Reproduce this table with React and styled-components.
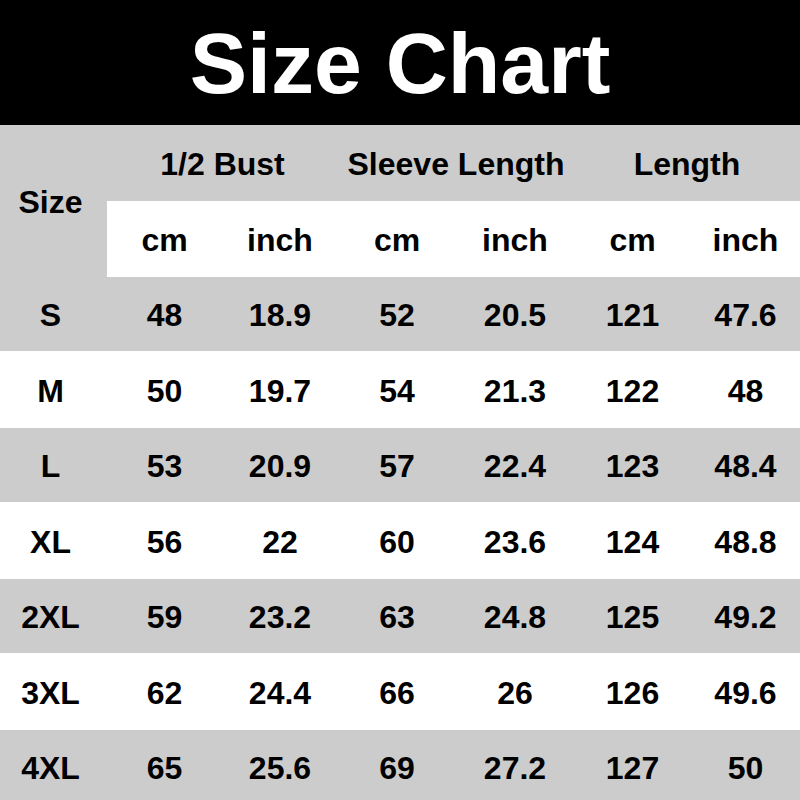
import styled, { createGlobalStyle } from 'styled-components';

const GRAY = '#cccccc';

const GlobalStyle = createGlobalStyle`
    html, body {
        margin: 0;
        padding: 0;
        background: #ffffff;
        overflow: hidden;
    }
    body {
        font-family: "Liberation Sans", Arial, sans-serif;
        color: #000000;
    }
`;

const Page = styled.div`
    width: 800px;
    height: 800px;
    overflow: hidden;
`;

const TitleBar = styled.header`
    height: 125px;
    background: #000000;
    display: flex;
    align-items: center;
    justify-content: center;
`;

const Title = styled.h1`
    margin: 0;
    color: #ffffff;
    font-size: 86px;
    font-weight: 700;
    line-height: 1;
`;

// size column + 3 groups of cm / inch
const Table = styled.div`
    display: grid;
    grid-template-columns: 107px 115px 116px 118px 118px 117px 109px;
    grid-template-rows: 76px 76px;
    grid-auto-rows: auto;
`;

const Cell = styled.div`
    display: flex;
    align-items: center;
    justify-content: center;
    background: ${p => (p.$gray ? GRAY : '#ffffff')};
    height: ${p => p.$h || 'auto'};
    padding-top: 2px;
    box-sizing: border-box;
    font-size: 32px;
    font-weight: 700;
    line-height: 1;
    white-space: nowrap;
`;

const SizeHead = styled(Cell)`
    grid-row: span 2;
    padding-right: 6px;
`;

const GroupHead = styled(Cell)`
    grid-column: span 2;
`;

const SizeCell = styled(Cell)`
    padding-right: 6px;
`;

const groups = ['1/2 Bust', 'Sleeve Length', 'Length'];

const rows = [
    ['S', '48', '18.9', '52', '20.5', '121', '47.6'],
    ['M', '50', '19.7', '54', '21.3', '122', '48'],
    ['L', '53', '20.9', '57', '22.4', '123', '48.4'],
    ['XL', '56', '22', '60', '23.6', '124', '48.8'],
    ['2XL', '59', '23.2', '63', '24.8', '125', '49.2'],
    ['3XL', '62', '24.4', '66', '26', '126', '49.6'],
    ['4XL', '65', '25.6', '69', '27.2', '127', '50'],
];

const App = () => {
    return (
        <Page>
            <GlobalStyle />
            <TitleBar>
                <Title>Size Chart</Title>
            </TitleBar>
            <Table>
                <SizeHead $gray>Size</SizeHead>
                {groups.map(g => (
                    <GroupHead key={g} $gray>{g}</GroupHead>
                ))}
                {groups.map(g => [
                    <Cell key={g + 'cm'}>cm</Cell>,
                    <Cell key={g + 'in'}>inch</Cell>,
                ])}
                {rows.map((row, i) => {
                    const gray = i % 2 === 0;
                    const h = gray ? '74px' : '77px';
                    return row.map((v, j) =>
                        j === 0 ? (
                            <SizeCell key={i + '-' + j} $gray={gray} $h={h}>{v}</SizeCell>
                        ) : (
                            <Cell key={i + '-' + j} $gray={gray} $h={h}>{v}</Cell>
                        )
                    );
                })}
            </Table>
        </Page>
    );
};

export default App;
